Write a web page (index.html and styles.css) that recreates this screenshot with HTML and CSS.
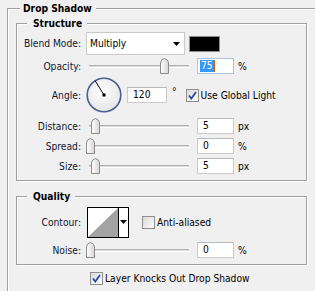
FILE: index.html
```html
<!DOCTYPE html>
<html>
<head>
<meta charset="utf-8">
<link rel="stylesheet" href="styles.css">
</head>
<body>
<svg width="0" height="0" class="defs">
  <defs>
    <linearGradient id="thumbGrad" x1="0" y1="0" x2="1" y2="0">
      <stop offset="0" stop-color="#ffffff"/>
      <stop offset="1" stop-color="#d6d6d6"/>
    </linearGradient>
    <linearGradient id="cbGrad" x1="0" y1="0" x2="1" y2="1">
      <stop offset="0" stop-color="#d8d8d8"/>
      <stop offset="1" stop-color="#ffffff"/>
    </linearGradient>
    <radialGradient id="dialGrad" cx="0.45" cy="0.4" r="0.6">
      <stop offset="0" stop-color="#ffffff"/>
      <stop offset="1" stop-color="#e6e6e6"/>
    </radialGradient>
    <symbol id="thumb" viewBox="0 0 9 16">
      <path d="M0.5,15.5 L0.5,5 Q0.5,1.5 4.5,0.5 Q8.5,1.5 8.5,5 L8.5,15.5 Z" fill="url(#thumbGrad)" stroke="#8c8c8c"/>
    </symbol>
    <symbol id="cb" viewBox="0 0 13 13">
      <rect x="0.5" y="0.5" width="12" height="12" fill="url(#cbGrad)" stroke="#8f8f8f"/>
    </symbol>
    <symbol id="check" viewBox="0 0 13 13">
      <path d="M3,6.5 L5.3,9.5 L10,3" fill="none" stroke="#2c45a0" stroke-width="1.8"/>
    </symbol>
  </defs>
</svg>
<div class="outer">
  <div class="legend legend-outer">Drop Shadow</div>

  <div class="group structure">
    <div class="legend">Structure</div>

    <div class="row row-blend">
      <span class="label">Blend Mode:</span>
      <div class="select">
        <span>Multiply</span>
        <svg class="arrow" width="7" height="4" viewBox="0 0 7 4"><polygon points="0,0 7,0 3.5,4" fill="#000"/></svg>
      </div>
      <div class="swatch"></div>
    </div>

    <div class="row row-field first">
      <span class="label">Opacity:</span>
      <div class="slider"><div class="track"></div><svg class="thumb" width="9" height="16" style="left:74px"><use href="#thumb"/></svg></div>
      <div class="input focused"><span class="sel">75</span><span class="caret"></span></div>
      <span class="unit">%</span>
    </div>

    <div class="row row-angle">
      <span class="label">Angle:</span>
      <svg class="dial" width="36" height="36" viewBox="0 0 36 36">
        <circle cx="18" cy="18" r="16.8" fill="url(#dialGrad)" stroke="#4a5f8c" stroke-width="1.6"/>
        <line x1="18" y1="18" x2="9" y2="3.5" stroke="#000" stroke-width="1"/>
        <rect x="16.5" y="16.5" width="3" height="3" fill="#000"/>
      </svg>
      <div class="input angle-input">120</div>
      <span class="deg">°</span>
      <svg class="checkbox cb-global" width="13" height="13"><use href="#cb"/><use href="#check"/></svg>
      <span class="cb-label">Use Global Light</span>
    </div>

    <div class="row row-field after-angle">
      <span class="label">Distance:</span>
      <div class="slider"><div class="track"></div><svg class="thumb" width="9" height="16" style="left:5px"><use href="#thumb"/></svg></div>
      <div class="input">5</div>
      <span class="unit">px</span>
    </div>

    <div class="row row-field">
      <span class="label">Spread:</span>
      <div class="slider"><div class="track"></div><svg class="thumb" width="9" height="16" style="left:0px"><use href="#thumb"/></svg></div>
      <div class="input">0</div>
      <span class="unit">%</span>
    </div>

    <div class="row row-field">
      <span class="label">Size:</span>
      <div class="slider"><div class="track"></div><svg class="thumb" width="9" height="16" style="left:5px"><use href="#thumb"/></svg></div>
      <div class="input">5</div>
      <span class="unit">px</span>
    </div>
  </div>

  <div class="group quality">
    <div class="legend">Quality</div>

    <div class="row row-contour">
      <span class="label">Contour:</span>
      <div class="contour">
        <svg class="contour-preview" width="30" height="29" viewBox="0 0 30 29">
          <rect width="30" height="29" fill="#fff"/>
          <polygon points="0,29 30,0 30,29" fill="#a3a3a3"/>
        </svg>
        <div class="contour-arrow">
          <svg width="7" height="4" viewBox="0 0 7 4"><polygon points="0,0 7,0 3.5,4" fill="#000"/></svg>
        </div>
      </div>
      <svg class="checkbox cb-aa" width="13" height="13"><use href="#cb"/></svg>
      <span class="cb-label">Anti-aliased</span>
    </div>

    <div class="row row-field noise">
      <span class="label">Noise:</span>
      <div class="slider"><div class="track"></div><svg class="thumb" width="9" height="16" style="left:0px"><use href="#thumb"/></svg></div>
      <div class="input">0</div>
      <span class="unit">%</span>
    </div>
  </div>

  <div class="row row-knock">
    <svg class="checkbox" width="13" height="13"><use href="#cb"/><use href="#check"/></svg>
    <span class="cb-label">Layer Knocks Out Drop Shadow</span>
  </div>
</div>
</body>
</html>
```

FILE: styles.css
```css
html, body {
  margin: 0;
  padding: 0;
}
body {
  background: #f0f0f0;
  font-family: "DejaVu Sans Condensed", "DejaVu Sans", sans-serif;
  font-stretch: condensed;
  font-size: 10.2px;
  color: #000;
  width: 315px;
  height: 291px;
  overflow: hidden;
}
.defs {
  position: absolute;
  width: 0;
  height: 0;
}
.outer {
  margin: 8px 0 0 7px;
  border-top: 1px solid #a0a0a0;
  border-left: 1px solid #a0a0a0;
  box-shadow: inset 1px 1px 0 #fff;
  padding: 0 0 0 8px;
  height: 282px;
}
.legend {
  width: fit-content;
  height: 13px;
  line-height: 13px;
  margin: -7px 0 0 10px;
  padding: 0 5px 0 6px;
  background: #f0f0f0;
  font-weight: bold;
  color: #000;
}
.legend-outer {
  margin-left: 4px;
  padding: 0 4px 0 3px;
}
.group {
  width: 289px;
  border: 1px solid #a0a0a0;
  box-shadow: inset 1px 1px 0 #fff, 1px 1px 0 #fff;
  padding: 0 0 6px 0;
}
.structure {
  margin-top: 8px;
}
.quality {
  margin-top: 15px;
}
.row {
  display: flex;
  align-items: center;
}
.label {
  flex: none;
  width: 64px;
  margin-right: 5px;
  text-align: right;
  white-space: nowrap;
  color: #101830;
}
.row-blend {
  height: 23px;
  margin-top: 2px;
}
.select {
  box-sizing: border-box;
  width: 99px;
  height: 23px;
  border: 1px solid #c9c9c9;
  background: #fff;
  display: flex;
  align-items: center;
  justify-content: space-between;
  padding: 0 4px 0 3px;
}
.select span {
  color: #000;
}
.swatch {
  box-sizing: border-box;
  margin-left: 4px;
  width: 31px;
  height: 16px;
  border: 1px solid #8c8c8c;
  background: #000;
}
.row-field {
  height: 16px;
  margin-top: 4px;
}
.row-field.first {
  margin-top: 3px;
}
.row-field.after-angle {
  margin-top: 5px;
}
.slider {
  position: relative;
  flex: none;
  width: 106px;
  height: 16px;
}
.track {
  margin: 7px 3px 0 3px;
  height: 1px;
  border-top: 1px solid #b2b2b2;
  border-bottom: 1px solid #fff;
  background: #d9d9d9;
}
.thumb {
  position: absolute;
  top: 0;
}
.input {
  box-sizing: border-box;
  flex: none;
  margin-left: 5px;
  width: 37px;
  height: 16px;
  line-height: 14px;
  border: 1px solid #cbcbcb;
  border-top-color: #b9b9b9;
  background: #fff;
  padding-left: 5px;
  color: #000;
  display: flex;
  align-items: center;
}
.input.focused {
  border-color: #a9c6ea;
  padding-left: 2px;
}
.sel {
  background: #3399ff;
  color: #fff;
  padding: 0 1px;
  line-height: 12px;
}
.caret {
  width: 1px;
  height: 12px;
  background: #c0580a;
}
.unit {
  margin-left: 4px;
}
.row-angle {
  height: 36px;
  margin-top: 3px;
}
.dial {
  flex: none;
}
.angle-input {
  width: 40px;
}
.deg {
  margin-left: 5px;
  align-self: flex-start;
  margin-top: 9px;
  line-height: 11px;
}
.checkbox {
  flex: none;
}
.cb-global {
  margin-left: 9px;
}
.cb-label {
  margin-left: 2px;
  white-space: nowrap;
  color: #000;
}
.row-contour {
  height: 31px;
  margin-top: 4px;
}
.contour {
  box-sizing: border-box;
  margin-left: 1px;
  width: 42px;
  height: 31px;
  border: 1px solid #000;
  display: flex;
  background: #fff;
}
.contour-preview {
  display: block;
}
.contour-arrow {
  border-left: 1px solid #000;
  flex: 1;
  display: flex;
  align-items: center;
  justify-content: center;
  padding-bottom: 2px;
}
.cb-aa {
  margin-left: 13px;
  margin-bottom: 1px;
}
.noise {
  margin-top: 4px;
}
.row-knock {
  height: 13px;
  margin-top: 7px;
  padding-left: 74px;
}
```
